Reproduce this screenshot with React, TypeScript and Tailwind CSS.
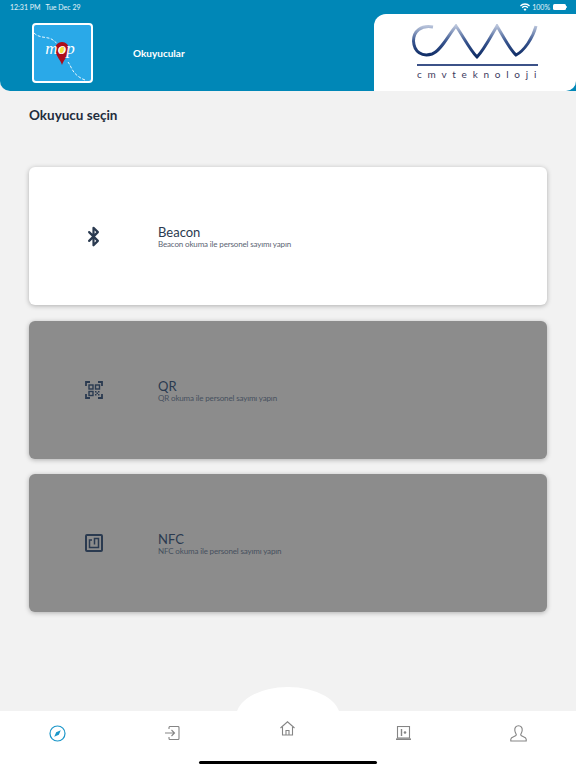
import { Bluetooth } from 'lucide-react'
import type { ReactNode } from 'react'

function MapLogo() {
  return (
    <div className="w-[61px] h-[60px] rounded-[4px] border-2 border-white bg-[#2aa9e8] overflow-hidden">
      <svg width="57" height="56" viewBox="0 0 57 56" fill="none">
        <path d="M0 8 C6 14 14 11 19 15 C21 17 22 17 23 19" stroke="#e8f6fd" strokeWidth="1" strokeDasharray="3 1.500" />
        <path d="M34 37 C38 42 38 50 51 55" stroke="#e8f6fd" strokeWidth="1" strokeDasharray="3 1.500" />
        <path d="M28 40 C26 34 21 30 21 24 A7 7 0 1 1 35 24 C35 30 30 34 28 40 Z" fill="#ad0d1a" />
        <circle cx="27.500" cy="25" r="3.200" fill="#f2e33c" />
        <text x="26" y="29" textAnchor="middle" fill="#fff" fontSize="17" fontStyle="italic" fontFamily="'Liberation Serif', serif">mop</text>
      </svg>
    </div>
  )
}

function CmvLogo() {
  return (
    <div className="flex flex-col w-[126px]">
      <svg width="126" height="36" viewBox="0 0 126 36" fill="none">
        <defs>
          <linearGradient id="cmv" x1="0" y1="0" x2="0" y2="1">
            <stop offset="0" stopColor="#b8c3da" />
            <stop offset="0.5" stopColor="#38558f" />
            <stop offset="1" stopColor="#0d2a63" />
          </linearGradient>
        </defs>
        <path
          d="M21 3 C9 1 1.500 7 1.500 17 C2 28 10 33 20 30 C29 27 37 10 44 2 C51 12 58 26 65 33 C72 26 79 12 85 2 C91 12 98 26 104 31 C112 27 121 14 124 2"
          stroke="url(#cmv)"
          strokeWidth="3"
        />
      </svg>
      <div className="w-[121px] h-[1.500px] bg-[#3c5288] mt-[4px] self-end" />
      <div className="text-[10px] leading-[13px] mt-[2px] tracking-[0.575em] text-[#3c3a5e] whitespace-nowrap pl-[5px] font-['Lato',sans-serif]">cmvteknoloji</div>
    </div>
  )
}

function BeaconCard({ icon, title, sub, off }: { icon: ReactNode; title: string; sub: string; off?: boolean }) {
  return (
    <div className={off
      ? 'h-[138px] rounded-[6px] bg-[#8c8c8c] shadow-[0_1px_5px_rgba(0,0,0,0.28)] flex items-center text-[#2a3a50]'
      : 'h-[138px] rounded-[6px] bg-white shadow-[0_1px_5px_rgba(0,0,0,0.28)] flex items-center text-[#2a3a50]'}>
      <div className="w-[129px] flex justify-center">{icon}</div>
      <div className="flex flex-col pt-[3px]">
        <div className="text-[13px] leading-[14px]">{title}</div>
        <div className={off ? 'text-[8px] leading-[11px] tracking-[-0.15px] text-[#46505e]' : 'text-[8px] leading-[11px] tracking-[-0.15px] text-[#5a6472]'}>{sub}</div>
      </div>
    </div>
  )
}

const QrIcon = (
  <svg width="18" height="18" viewBox="0 0 18 18" fill="none" stroke="currentColor" strokeWidth="1.400">
    <path d="M1 5V1H5M13 1H17V5M17 13V17H13M5 17H1V13" strokeWidth="1.800" />
    <rect x="4" y="4" width="4" height="4" />
    <rect x="10.500" y="4" width="4" height="4" />
    <rect x="4" y="10.500" width="4" height="4" />
    <path d="M10 10h1.500v1.500H10zM13 10h1.500v1.500H13zM11.500 11.500H13V13h-1.500zM10 13h1.500v1.500H10zM13 13h1.500v1.500H13z" fill="currentColor" stroke="none" />
  </svg>
)

const NfcIcon = (
  <svg width="18" height="18" viewBox="0 0 18 18" fill="none" stroke="currentColor">
    <rect x="1" y="1" width="16" height="16" rx="1" strokeWidth="2" />
    <path d="M7 6H4.500V13.500H13.500V4.500H9.500V10.500" strokeWidth="1.500" />
  </svg>
)

function NavItems() {
  return (
    <div className="grid grid-cols-5 h-full">
      <div className="flex justify-center pt-[14px]">
        <svg width="17" height="17" viewBox="0 0 17 17" fill="none">
          <circle cx="8.500" cy="8.500" r="7.500" stroke="#1b96c9" strokeWidth="1.200" />
          <path d="M11.800 5.200L9.800 9.800L5.200 11.800L7.200 7.200Z" fill="#1b96c9" />
        </svg>
      </div>
      <div className="flex justify-center pt-[15px]">
        <svg width="15" height="14" viewBox="0 0 15 14" fill="none" stroke="#858585" strokeWidth="1.100">
          <path d="M0 7H9M6.500 4L9.500 7L6.500 10" />
          <path d="M4 3V1.500A1 1 0 0 1 5 0.500H13A1 1 0 0 1 14 1.500V12.500A1 1 0 0 1 13 13.500H5A1 1 0 0 1 4 12.500V11" />
        </svg>
      </div>
      <div className="flex justify-center pt-[10px]">
        <svg width="15" height="15" viewBox="0 0 15 15" fill="none" stroke="#858585" strokeWidth="1.100">
          <path d="M0.500 7L7.500 0.800L14.500 7" />
          <path d="M2.500 6V14H12.500V6" />
          <path d="M6 14V9.500H9V14" />
        </svg>
      </div>
      <div className="flex justify-center pt-[15px]">
        <svg width="15" height="14" viewBox="0 0 15 14" fill="none" stroke="#858585" strokeWidth="1.100">
          <rect x="1.500" y="0.500" width="12" height="11.500" />
          <path d="M5.500 3V10" strokeWidth="1.400" />
          <circle cx="9" cy="6.500" r="1.300" fill="#858585" stroke="none" />
          <path d="M0 13.200H15" strokeWidth="1.600" />
        </svg>
      </div>
      <div className="flex justify-center pt-[14px]">
        <svg width="17" height="17" viewBox="0 0 17 17" fill="none" stroke="#858585" strokeWidth="1.100">
          <path d="M8.500 0.700C5.800 0.700 4.600 3 4.800 5.300C5 7.500 6 8.500 6.300 9.500C6.500 10.500 5.500 11 4 11.600C2.500 12.200 0.800 12.700 0.800 14.300V16H16.200V14.300C16.200 12.700 14.500 12.200 13 11.600C11.500 11 10.500 10.500 10.700 9.500C11 8.500 12 7.500 12.200 5.300C12.400 3 11.200 0.700 8.500 0.700Z" />
        </svg>
      </div>
    </div>
  )
}

export default function App() {
  return (
    <div className="relative w-[576px] h-[768px] bg-[#f2f2f2] flex flex-col overflow-hidden font-['Lato',sans-serif]">
      {/* header */}
      <header className="relative h-[91px] bg-[#0087b7] rounded-bl-[10px] flex justify-between shrink-0">
        <div className="absolute top-0 left-0 right-0 h-[14px] flex items-center justify-between pl-[10px] pr-[9px] text-[7px] text-white/90">
          <div className="flex gap-[5px]">
            <span>12:31 PM</span>
            <span>Tue Dec 29</span>
          </div>
          <div className="flex items-center gap-[2px]">
            <svg width="10" height="8" viewBox="0 0 10 8" fill="#fff">
              <path d="M5 8L3.500 6.300A2 2 0 0 1 6.500 6.300ZM2.600 5.300L1.700 4.300A4.500 4.500 0 0 1 8.300 4.300L7.400 5.300A3.300 3.300 0 0 0 2.600 5.300ZM0.900 3.400L0 2.400A7 7 0 0 1 10 2.400L9.100 3.400A5.700 5.700 0 0 0 0.900 3.400Z" />
            </svg>
            <span>100%</span>
            <div className="flex items-center ml-[1px]">
              <div className="w-[13px] h-[6px] rounded-[1.500px] bg-white" />
              <div className="w-[1px] h-[2px] bg-white/70" />
            </div>
          </div>
        </div>
        <div className="flex items-center pl-[32px] pt-[15px]">
          <MapLogo />
          <div className="ml-[40px] text-[10px] font-bold text-white">Okuyucular</div>
        </div>
        <div className="w-[202px] mt-[14px] bg-white rounded-tl-[12px] rounded-br-[10px] flex justify-center pt-[10px]">
          <CmvLogo />
        </div>
      </header>

      {/* content */}
      <main className="flex-1 px-[29px]">
        <h1 className="mt-[15px] text-[13.500px] leading-[18px] font-bold text-[#1f2d3d]">Okuyucu seçin</h1>
        <div className="mt-[43px] flex flex-col gap-[15.500px]">
          <BeaconCard icon={<Bluetooth size={21} strokeWidth={2.5} />} title="Beacon" sub="Beacon okuma ile personel sayımı yapın" />
          <BeaconCard off icon={QrIcon} title="QR" sub="QR okuma ile personel sayımı yapın" />
          <BeaconCard off icon={NfcIcon} title="NFC" sub="NFC okuma ile personel sayımı yapın" />
        </div>
      </main>

      {/* bottom nav */}
      <div className="absolute left-[236px] top-[687px] w-[104px] h-[60px] rounded-[50%] bg-white" />
      <nav className="relative h-[57px] bg-white shrink-0">
        <NavItems />
        <div className="absolute left-[199px] bottom-[4px] w-[178px] h-[3px] rounded-full bg-black" />
      </nav>
    </div>
  )
}
